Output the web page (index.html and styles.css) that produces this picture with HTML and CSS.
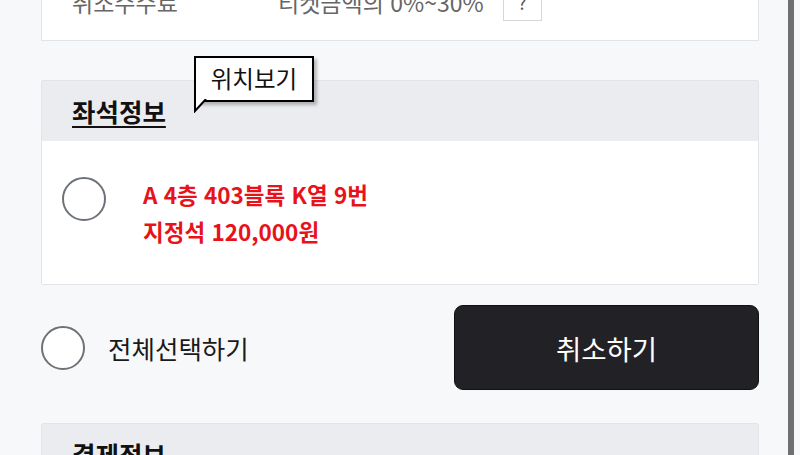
FILE: index.html
```html
<!DOCTYPE html>
<html lang="ko">
<head>
<meta charset="utf-8">
<link rel="stylesheet" href="styles.css">
</head>
<body>
<div class="page">
  <section class="card fee-card">
    <div class="fee-row">
      <span class="fee-label">취소수수료</span>
      <span class="fee-value">티켓금액의 0%~30%</span>
      <span class="help-box">?</span>
    </div>
  </section>

  <section class="panel seat-panel">
    <header class="panel-head">
      <h2 class="panel-title underline">좌석정보</h2>
      <div class="tooltip">
        위치보기
        <svg class="tooltip-tail" width="14" height="14" viewBox="0 0 14 14"><path d="M1 0 L1 12 L12 0" fill="#fff" stroke="#000" stroke-width="2"/></svg>
      </div>
    </header>
    <div class="panel-body seat-body">
      <span class="radio"></span>
      <div class="seat-text">
        <div>A 4층 403블록 K열 9번</div>
        <div>지정석 120,000원</div>
      </div>
    </div>
  </section>

  <div class="action-row">
    <label class="select-all"><span class="radio"></span><span>전체선택하기</span></label>
    <button class="cancel-btn">취소하기</button>
  </div>

  <section class="panel">
    <header class="panel-head">
      <h2 class="panel-title">결제정보</h2>
    </header>
  </section>
</div>
<div class="edge-bar"></div>
</body>
</html>
```

FILE: styles.css
```css
html, body {
  margin: 0;
  padding: 0;
  height: 455px;
  overflow: hidden;
}
body {
  background: #f7f8fa;
  font-family: "Noto Sans CJK KR", "Noto Sans", sans-serif;
  color: #222;
  position: relative;
}
.page {
  padding: 0 41px;
  display: flex;
  flex-direction: column;
}
.card {
  background: #fff;
  border: 1px solid #e2e4e8;
  border-top: none;
}
.fee-card {
  margin-top: -18px;
  padding: 0 30px 19px;
}
.fee-row {
  display: flex;
  align-items: center;
  height: 39px;
  font-size: 23px;
  color: #666;
}
.fee-label {
  width: 206px;
}
.fee-value {
  margin-right: 19px;
}
.help-box {
  width: 37px;
  height: 37px;
  border: 1px solid #d5d7db;
  display: flex;
  align-items: center;
  justify-content: center;
  font-size: 18px;
  color: #555;
}
.panel {
  margin-top: 39px;
  border: 1px solid #e2e4e8;
  border-radius: 2px;
  background: #fff;
}
.panel-head {
  background: #ebecf0;
  height: 60px;
  padding: 0 30px;
  position: relative;
}
.panel-title {
  margin: 0;
  font-size: 25.5px;
  font-weight: 700;
  line-height: 60px;
  color: #111;
}
.underline {
  text-decoration: underline;
  text-underline-offset: 4px;
  text-decoration-thickness: 2px;
}
.tooltip {
  position: absolute;
  left: 152px;
  top: -25px;
  width: 116px;
  height: 42px;
  border: 2px solid #000;
  background: #fff;
  font-size: 23.5px;
  line-height: 40px;
  text-align: center;
  color: #111;
  box-shadow: 3px 3px 3px rgba(0,0,0,0.25);
}
.tooltip-tail {
  position: absolute;
  left: -2px;
  bottom: -13px;
}
.panel-body {
  background: #fff;
}
.seat-body {
  display: flex;
  align-items: flex-start;
  padding: 36px 20px 34px;
  gap: 37px;
}
.radio {
  width: 40px;
  height: 40px;
  border: 2px solid #6d7279;
  border-radius: 50%;
  background: #fff;
  flex: none;
}
.seat-text {
  color: #e8121b;
  font-size: 22.5px;
  font-weight: 700;
  line-height: 37px;
  margin-top: -1px;
}
.action-row {
  display: flex;
  align-items: center;
  justify-content: space-between;
  padding: 20px 0 0;
}
.select-all {
  display: flex;
  align-items: center;
  gap: 23px;
  font-size: 25.5px;
  color: #1a1a1a;
}
.cancel-btn {
  width: 305px;
  height: 85px;
  background: #222226;
  border: 1px solid #111;
  border-radius: 9px;
  color: #fff;
  font-family: "Noto Sans CJK KR", "Noto Sans", sans-serif;
  font-size: 27.5px;
  padding: 0;
}
.action-row + .panel {
  margin-top: 33px;
}
.edge-bar {
  position: absolute;
  top: 0;
  right: 6px;
  width: 6px;
  height: 455px;
  background: #707070;
}
```
